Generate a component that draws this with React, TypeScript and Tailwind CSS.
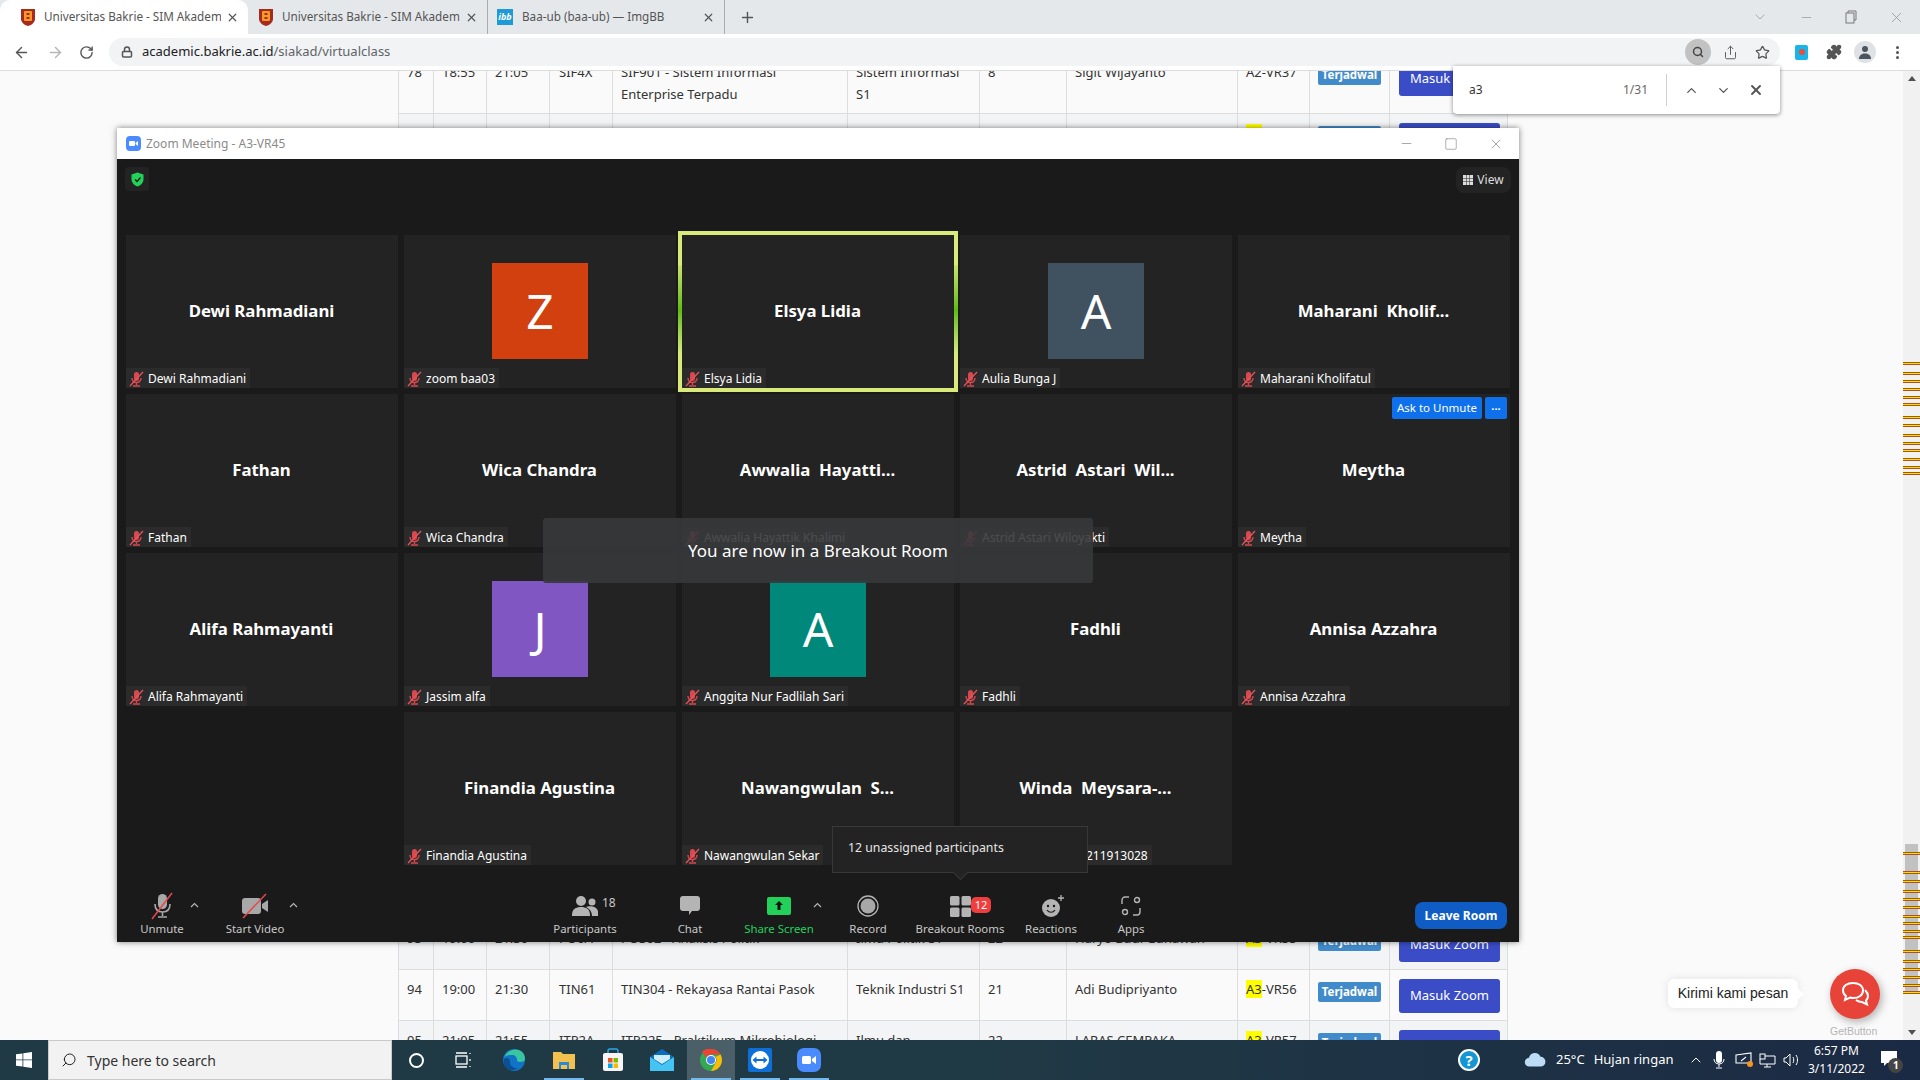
import React from "react";
import { ArrowLeft, ArrowRight, RotateCw, Lock, X, Plus, ChevronUp, ChevronDown, Star, Share, Puzzle, Search, Minus, Square } from "lucide-react";

const tiles = [
  { name: "Dewi Rahmadiani", label: "Dewi Rahmadiani" },
  { name: "", label: "zoom baa03", letter: "Z", color: "bg-[#d24010]" },
  { name: "Elsya Lidia", label: "Elsya Lidia", active: true },
  { name: "", label: "Aulia Bunga J", letter: "A", color: "bg-[#40525f]" },
  { name: "Maharani  Kholif...", label: "Maharani Kholifatul" },
  { name: "Fathan", label: "Fathan" },
  { name: "Wica Chandra", label: "Wica Chandra" },
  { name: "Awwalia  Hayatti...", label: "Awwalia Hayattik Khalimi" },
  { name: "Astrid  Astari  Wil...", label: "Astrid Astari Wiloyakti" },
  { name: "Meytha", label: "Meytha", unmute: true },
  { name: "Alifa Rahmayanti", label: "Alifa Rahmayanti" },
  { name: "", label: "Jassim alfa", letter: "J", color: "bg-[#7f56c2]" },
  { name: "", label: "Anggita Nur Fadlilah Sari", letter: "A", color: "bg-[#00897b]" },
  { name: "Fadhli", label: "Fadhli" },
  { name: "Annisa Azzahra", label: "Annisa Azzahra" },
];

const lastRow = [
  { name: "Finandia Agustina", label: "Finandia Agustina" },
  { name: "Nawangwulan  S...", label: "Nawangwulan Sekar" },
  { name: "Winda  Meysara-...", label: "Winda Meysara-11211913028" },
];

const marks = [362, 372, 380, 388, 396, 403, 416, 424, 434, 442, 449, 458, 466, 472, 852, 871, 880, 890, 898, 906, 915, 922, 930, 936, 950, 960, 968, 976, 984, 991];

const cols = [35, 53, 63, 63, 235, 132, 87, 171, 72, 80, 118];

const SmallMicOff = () => (
  <svg width="15" height="16" viewBox="0 0 15 16" className="shrink-0">
    <rect x="5" y="1" width="5" height="9" rx="2.5" fill="#d9484f" />
    <path d="M3 7c0 3 2 4.500 4.500 4.500S12 10 12 7M7.500 11.500V14M4 15h7" stroke="#d9484f" strokeWidth="1.400" fill="none" />
    <path d="M1 15L14 1" stroke="#e4555a" strokeWidth="1.300" />
  </svg>
);

const Tile = ({ t }: { t: any }) => (
  <div className={`relative flex h-[153px] w-[272px] items-center justify-center bg-[#232323] ${t.active ? "outline-[4px] outline-[#d9e97a] z-10" : ""}`}>
    {t.active && <div className="absolute -left-[4px] top-[30px] h-[90px] w-[4px] bg-gradient-to-b from-[#c6e36a] via-[#62bb0a] to-[#d8ec80]" />}
    {t.active && <div className="absolute -right-[4px] top-[30px] h-[90px] w-[4px] bg-gradient-to-b from-[#c6e36a] via-[#62bb0a] to-[#d8ec80]" />}
    {t.letter ? (
      <div className={`-mt-[1px] flex h-[96px] w-[96px] items-center justify-center text-[48px] leading-none text-white ${t.color}`}>{t.letter}</div>
    ) : (
      <span className="mb-[2px] mr-[1px] whitespace-pre text-[16.800px] font-bold text-white">{t.name}</span>
    )}
    <div className="absolute bottom-0 left-0 flex h-[20px] items-center gap-[4px] bg-[#2b2b2b] pl-[3px] pr-[4px] pt-[1px] text-[12px] text-white">
      <SmallMicOff />
      <span className="whitespace-nowrap">{t.label}</span>
    </div>
    {t.unmute && (
      <div className="absolute right-[3px] top-[3px] flex gap-[3px]">
        <div className="flex h-[22px] w-[90px] items-center justify-center rounded-[2px] bg-[#0e71eb] text-[11.500px] text-white">Ask to Unmute</div>
        <div className="flex h-[22px] w-[22px] items-center justify-center rounded-[2px] bg-[#0e71eb] text-[11px] font-bold leading-none text-white">···</div>
      </div>
    )}
  </div>
);

const Caret = ({ left }: { left: string }) => (
  <svg width="9" height="6" viewBox="0 0 9 6" className={`absolute top-[11px] ${left}`}>
    <path d="M1 5l3.500-3.500L8 5" stroke="#b5b5b5" strokeWidth="1.200" fill="none" />
  </svg>
);

const ToolItem = ({ label, className, children, green }: { label: string; className: string; children: React.ReactNode; green?: boolean }) => (
  <div className={`relative flex shrink-0 flex-col items-center ${className}`}>
    <div className="flex h-[30px] items-center justify-center">{children}</div>
    <span className={`-mt-[1px] whitespace-nowrap text-[11.400px] leading-[18px] ${green ? "text-[#22d15a]" : "text-[#c8c8c8]"}`}>{label}</span>
  </div>
);

const ZoomWindow = () => (
  <div className="absolute left-[117px] top-[128px] flex h-[814px] w-[1402px] flex-col shadow-[0_0_6px_rgba(0,0,0,0.5)]">
    <div className="flex h-[31px] shrink-0 items-center bg-white pl-[9px]">
      <svg width="15" height="15" viewBox="0 0 15 15">
        <rect width="15" height="15" rx="4" fill="#4a8cff" />
        <rect x="3" y="5" width="6" height="5" rx="1" fill="#fff" />
        <path d="M9.500 7l2.500-2v5l-2.500-2z" fill="#fff" />
      </svg>
      <span className="ml-[5px] text-[12px] text-[#8a8a8a]">Zoom Meeting - A3-VR45</span>
      <div className="ml-auto flex items-center gap-[30px] pr-[15px] text-[#777]">
        <Minus size={15} strokeWidth={1} />
        <Square size={14} strokeWidth={1} />
        <X size={16} strokeWidth={1} />
      </div>
    </div>
    <div className="flex flex-1 flex-col bg-[#1a1a1a]">
      <div className="flex h-[76px] shrink-0 items-start justify-between pl-[8px] pr-[8px] pt-[8px]">
        <div className="flex h-[24px] w-[24px] items-center justify-center rounded-[4px] bg-[#232323]">
          <svg width="13" height="15" viewBox="0 0 13 15">
            <path d="M6.500 0.500L12.500 2.500V7c0 4-3 6.500-6 7.500-3-1-6-3.500-6-7.500V2.500z" fill="#22d15a" />
            <path d="M4 7.500l2 2 3.500-4" stroke="#111" strokeWidth="1.200" fill="none" />
          </svg>
        </div>
        <div className="flex h-[26px] w-[55px] items-center justify-center gap-[4px] rounded-[8px] bg-[#232323] text-[12px] text-[#dcdcdc]">
          <svg width="10" height="10" viewBox="0 0 10 10" fill="#ddd">
            <rect width="3" height="3" /><rect x="3.500" width="3" height="3" /><rect x="7" width="3" height="3" />
            <rect y="3.500" width="3" height="3" /><rect x="3.500" y="3.500" width="3" height="3" /><rect x="7" y="3.500" width="3" height="3" />
            <rect y="7" width="3" height="3" /><rect x="3.500" y="7" width="3" height="3" /><rect x="7" y="7" width="3" height="3" />
          </svg>
          View
        </div>
      </div>
      <div className="grid grid-cols-[repeat(5,272px)] gap-[6px] pl-[9px]">
        {tiles.map((t, i) => <Tile key={i} t={t} />)}
        <div />
        {lastRow.map((t, i) => <Tile key={i} t={t} />)}
      </div>
      <div className="flex flex-1 items-start pt-[26px]">
        <ToolItem label="Unmute" className="ml-[10px] w-[70px]">
          <svg width="30" height="30" viewBox="0 0 30 30">
            <rect x="11" y="3" width="9" height="15" rx="4.500" fill="#a8a8a8" />
            <path d="M8 13c0 6 3 8 7.500 8s7.500-2 7.500-8M15.500 21v4M11 26h9" stroke="#a8a8a8" strokeWidth="1.600" fill="none" />
            <path d="M5 28L25 2" stroke="#e5484d" strokeWidth="1.500" />
          </svg>
          <Caret left="left-[63px]" />
        </ToolItem>
        <ToolItem label="Start Video" className="ml-[20px] w-[76px]">
          <svg width="30" height="30" viewBox="0 0 30 30">
            <rect x="2" y="7" width="19" height="16" rx="3" fill="#a8a8a8" />
            <path d="M22 13l6-4v12l-6-4z" fill="#a8a8a8" />
            <path d="M3 27L26 3" stroke="#e5484d" strokeWidth="1.500" />
          </svg>
          <Caret left="left-[72px]" />
        </ToolItem>
        <ToolItem label="Participants" className="ml-[252px] w-[80px]">
          <svg width="26" height="22" viewBox="0 0 26 22" fill="#b4b4b4">
            <circle cx="9" cy="6" r="5" /><path d="M0 20c0-6 4-8 9-8s9 2 9 8v1H0z" />
            <circle cx="20" cy="7" r="3.500" /><path d="M14 12c2-1 10-2 12 4v5h-6c0-4-2-7-6-9z" />
          </svg>
          <span className="absolute left-[57px] top-[3px] text-[12px] text-[#c8c8c8]">18</span>
        </ToolItem>
        <ToolItem label="Chat" className="ml-[40px] w-[50px]">
          <svg width="22" height="22" viewBox="0 0 22 22" fill="#b4b4b4">
            <path d="M4 1h14a3 3 0 013 3v9a3 3 0 01-3 3h-5l-3 4v-4H4a3 3 0 01-3-3V4a3 3 0 013-3z" />
          </svg>
        </ToolItem>
        <ToolItem label="Share Screen" green className="ml-[24px] w-[80px]">
          <svg width="24" height="18" viewBox="0 0 24 18">
            <rect width="24" height="18" rx="2" fill="#22d15a" />
            <path d="M12 4l-4 4h2.500v5h3V8H16z" fill="#111" />
          </svg>
          <Caret left="left-[74px]" />
        </ToolItem>
        <ToolItem label="Record" className="ml-[24px] w-[50px]">
          <svg width="22" height="22" viewBox="0 0 22 22">
            <circle cx="11" cy="11" r="10" stroke="#b4b4b4" strokeWidth="1.300" fill="none" />
            <circle cx="11" cy="11" r="7.500" fill="#a8a8a8" />
          </svg>
        </ToolItem>
        <ToolItem label="Breakout Rooms" className="ml-[22px] w-[90px]">
          <svg width="21" height="21" viewBox="0 0 21 21" fill="#b4b4b4">
            <rect width="9.500" height="9.500" rx="1.500" /><rect x="11.500" width="9.500" height="9.500" rx="1.500" />
            <rect y="11.500" width="9.500" height="9.500" rx="1.500" /><rect x="11.500" y="11.500" width="9.500" height="9.500" rx="1.500" />
          </svg>
          <span className="absolute left-[56px] top-[6px] flex h-[16px] w-[20px] items-center justify-center rounded-[5px] bg-[#f03e3e] text-[11px] text-white">12</span>
        </ToolItem>
        <ToolItem label="Reactions" className="ml-[16px] w-[60px]">
          <svg width="24" height="24" viewBox="0 0 24 24" className="ml-[3px]">
            <circle cx="10" cy="14" r="9" fill="#b4b4b4" />
            <circle cx="7" cy="12" r="1.200" fill="#1a1a1a" /><circle cx="13" cy="12" r="1.200" fill="#1a1a1a" />
            <path d="M6 16c2 3 6 3 8 0" stroke="#1a1a1a" strokeWidth="1.200" fill="none" />
            <path d="M20 1v6M17 4h6" stroke="#b4b4b4" strokeWidth="1.300" />
          </svg>
        </ToolItem>
        <ToolItem label="Apps" className="ml-[30px] w-[40px]">
          <svg width="20" height="20" viewBox="0 0 20 20" fill="none" stroke="#b4b4b4" strokeWidth="1.400">
            <path d="M1 8V4a3 3 0 013-3h4M19 12v4a3 3 0 01-3 3h-4" />
            <circle cx="16" cy="4" r="2.500" /><circle cx="4" cy="16" r="2.500" />
          </svg>
        </ToolItem>
        <div className="ml-auto mr-[12px] mt-[11px] flex h-[27px] w-[92px] items-center justify-center rounded-[8px] bg-[#0e5cc4] text-[12px] font-bold text-white">Leave Room</div>
      </div>
    </div>
    <div className="absolute left-[426px] top-[390px] z-20 flex h-[65px] w-[550px] items-center justify-center rounded-[3px] bg-[#37383b]/90 text-[17px] text-white">You are now in a Breakout Room</div>
    <div className="absolute left-[715px] top-[698px] z-20 flex h-[47px] w-[256px] items-center border border-[#383838] bg-[#232323] pl-[15px] pb-[3px] text-[12.300px] text-[#e6e6e6]">
      12 unassigned participants
      <div className="absolute -bottom-[6px] left-[122px] h-[11px] w-[11px] rotate-45 border-b border-r border-[#383838] bg-[#232323]" />
    </div>
  </div>
);

const Row = ({ r, shade }: { r: string[]; shade?: boolean }) => (
  <tr className={`h-[51px] ${shade ? "bg-[#f3f4f5]" : "bg-[#fafafa]"}`}>
    {r.slice(0, 8).map((c, i) => (
      <td key={i} className="border border-[#dddddd] px-[8px] py-[8px] align-top leading-[22px]">
        {i === 3 ? <span className="ml-[1px]">{c}</span> : c}
      </td>
    ))}
    <td className="border border-[#dddddd] px-[8px] py-[8px] align-top leading-[22px]">
      {r[8].startsWith("A3") ? <><mark className="bg-[#ffff00] text-[#333]">A3</mark>{r[8].slice(2)}</> : r[8]}
    </td>
    <td className="border border-[#dddddd] px-[8px] pt-[12px] align-top">
      <div className="flex h-[20px] w-[63px] items-center justify-center rounded-[2px] bg-[#428bca] text-[11.500px] font-bold text-white">Terjadwal</div>
    </td>
    <td className="border border-[#dddddd] pl-[9px] pt-[9px] align-top">
      <div className="flex h-[34px] w-[101px] items-center justify-center rounded-[3px] bg-[#3a4dc6] text-[13px] text-white">Masuk Zoom</div>
    </td>
  </tr>
);

const Table = () => (
  <table className="ml-[398px] -mt-[19px] w-[1109px] table-fixed border-collapse text-[13px] text-[#333]">
    <colgroup>
      {cols.map((w, i) => <col key={i} style={{ width: w }} />)}
    </colgroup>
    <tbody>
      <Row r={["78", "18:55", "21:05", "SIF4X", "SIF901 - Sistem Informasi Enterprise Terpadu", "Sistem Informasi S1", "8", "Sigit Wijayanto", "A2-VR37"]} />
      <Row shade r={["79", "19:05", "21:05", "MN K1X", "MN K100 - Pemasaran Manajemen", "Manajemen S1", "20", "Didik H", "A3-VR44"]} />
      <tr className="h-[744px]"><td colSpan={11} /></tr>
      <Row shade r={["93", "19:00", "21:30", "PO6A", "PO302 - Analisis Politik", "Ilmu Politik S1", "22", "Haryo Budi Gunawan", "A3-VR55"]} />
      <Row r={["94", "19:00", "21:30", "TIN61", "TIN304 - Rekayasa Rantai Pasok", "Teknik Industri S1", "21", "Adi Budipriyanto", "A3-VR56"]} />
      <Row shade r={["95", "21:05", "21:55", "ITP2A", "ITP225 - Praktikum Mikrobiologi", "Ilmu dan", "22", "LARAS CEMPAKA", "A3-VR57"]} />
    </tbody>
  </table>
);

const Scrollbar = () => (
  <div className="relative w-[17px] shrink-0 bg-[#f1f1f1]">
    <div className="absolute left-[5px] top-[5px] h-0 w-0 border-x-[4px] border-b-[5px] border-x-transparent border-b-[#505050]" />
    <div className="absolute left-[2px] top-[773px] h-[147px] w-[13px] bg-[#c1c1c1]" />
    {marks.map((m) => (
      <div key={m} className="absolute left-0 h-[3px] w-[17px] border-y border-[#a9551a] bg-[#f6e000]" style={{ top: m - 71 }} />
    ))}
    <div className="absolute bottom-[5px] left-[5px] h-0 w-0 border-x-[4px] border-t-[5px] border-x-transparent border-t-[#505050]" />
  </div>
);

const Shield = () => (
  <svg width="14" height="18" viewBox="0 0 14 18" className="shrink-0">
    <path d="M0 1h14v10c0 3-3 6-7 7-4-1-7-4-7-7z" fill="#a62a20" />
    <rect x="3" y="3" width="8" height="10" rx="1" fill="#f59a23" />
    <rect x="5.500" y="5" width="3" height="2" fill="#a62a20" /><rect x="5.500" y="9" width="3" height="2" fill="#a62a20" />
  </svg>
);

const Tab = ({ icon, title, className }: { icon: React.ReactNode; title: string; className: string }) => (
  <div className={`flex h-[34px] shrink-0 items-center pr-[9px] text-[11.700px] text-[#555] ${className}`}>
    {icon}
    <span className="ml-[9px] flex-1 overflow-hidden whitespace-nowrap">{title}</span>
    <X size={13} strokeWidth={2.200} className="ml-[5px] shrink-0 text-[#555]" />
  </div>
);

const BrowserChrome = () => (
  <>
    <div className="flex h-[34px] shrink-0 items-end bg-[#e5e8eb]">
      <Tab icon={<Shield />} title="Universitas Bakrie - SIM Akademik" className="w-[248px] rounded-t-[10px] bg-white pl-[21px]" />
      <Tab icon={<Shield />} title="Universitas Bakrie - SIM Akademik" className="w-[239px] pl-[11px]" />
      <Tab
        icon={<div className="flex h-[16px] w-[16px] shrink-0 items-center justify-center bg-[#1e9bd7] text-[9px] italic font-bold text-white">ibb</div>}
        title="Baa-ub (baa-ub) — ImgBB"
        className="w-[238px] border-x border-[#a9acb0] pl-[9px]"
      />
      <div className="flex h-[34px] w-[44px] items-center justify-center"><Plus size={17} strokeWidth={2} className="text-[#555]" /></div>
      <div className="ml-auto flex h-[34px] items-center gap-[31px] pr-[15px] text-[#8a8c8e]">
        <ChevronDown size={16} strokeWidth={1} />
        <Minus size={15} strokeWidth={1} />
        <svg width="12" height="14" viewBox="0 0 12 14" fill="none" stroke="#777" strokeWidth="1"><rect x="1" y="3" width="8" height="10" /><path d="M3 3V1h8v9H9" /></svg>
        <X size={17} strokeWidth={1} />
      </div>
    </div>
    <div className="flex h-[37px] shrink-0 items-center border-b border-[#dcdcdc] bg-white">
      <ArrowLeft size={17} strokeWidth={2} className="ml-[13px] text-[#555]" />
      <ArrowRight size={17} strokeWidth={2} className="ml-[17px] text-[#b5b5b5]" />
      <RotateCw size={15} strokeWidth={2.200} className="ml-[15px] text-[#555]" />
      <div className="ml-[15px] flex h-[28px] w-[1671px] items-center rounded-full bg-[#f1f3f4] pl-[12px]">
        <Lock size={12} strokeWidth={3} className="text-[#555]" />
        <span className="ml-[9px] text-[13px] text-[#202124]">academic.bakrie.ac.id<span className="text-[#5f6368]">/siakad/virtualclass</span></span>
        <div className="ml-auto flex items-center">
          <div className="flex h-[26px] w-[26px] items-center justify-center rounded-full bg-[#c2c2c2]"><Search size={12} strokeWidth={3} className="text-[#444]" /></div>
          <Share size={15} strokeWidth={1.500} className="ml-[12px] text-[#555]" />
          <Star size={15} strokeWidth={2} className="ml-[17px] mr-[10px] text-[#555]" />
        </div>
      </div>
      <div className="ml-[15px] flex h-[15px] w-[13px] items-center justify-center rounded-[2px] bg-[#16b5ea]"><div className="h-[6px] w-[6px] rounded-full bg-[#ef4b3a]" /></div>
      <Puzzle size={16} strokeWidth={2} fill="#555" className="ml-[18px] text-[#555]" />
      <div className="ml-[12px] flex h-[22px] w-[22px] items-center justify-center rounded-full bg-[#dfe1e5]">
        <svg width="14" height="14" viewBox="0 0 14 14" fill="#4a5560"><circle cx="7" cy="4" r="3" /><path d="M1 14c0-4 3-5.500 6-5.500s6 1.500 6 5.500z" /></svg>
      </div>
      <div className="ml-[20px] flex flex-col gap-[2px]">
        <div className="h-[3px] w-[3px] rounded-full bg-[#555]" /><div className="h-[3px] w-[3px] rounded-full bg-[#555]" /><div className="h-[3px] w-[3px] rounded-full bg-[#555]" />
      </div>
    </div>
  </>
);

const FindBar = () => (
  <div className="absolute left-[1453px] top-[66px] z-30 flex h-[48px] w-[327px] items-center rounded-b-[4px] bg-white pl-[16px] pr-[16px] text-[12px] shadow-[0_1px_4px_rgba(0,0,0,0.45)]">
    <span className="text-[#333]">a3</span>
    <span className="ml-auto text-[#666]">1/31</span>
    <div className="ml-[18px] mr-[17px] h-[32px] w-px bg-[#d0d0d0]" />
    <ChevronUp size={15} strokeWidth={2} className="text-[#555]" />
    <ChevronDown size={15} strokeWidth={2} className="ml-[17px] text-[#555]" />
    <X size={16} strokeWidth={2.800} className="ml-[17px] text-[#555]" />
  </div>
);

const ChatWidget = () => (
  <>
    <div className="absolute left-[1668px] top-[979px] z-10 flex h-[29px] w-[130px] items-center justify-center rounded-[6px] bg-white font-['Liberation_Sans',sans-serif] text-[14px] text-[#222] shadow-[0_0_8px_rgba(0,0,0,0.1)]">
      Kirimi kami pesan
      <div className="absolute -right-[4px] top-[11px] h-[8px] w-[8px] rotate-45 bg-white" />
    </div>
    <div className="absolute left-[1830px] top-[969px] z-10 flex h-[50px] w-[50px] items-center justify-center rounded-full bg-[#e74339] shadow-[2px_3px_8px_rgba(0,0,0,0.3)]">
      <svg width="28" height="26" viewBox="0 0 28 26" fill="none" stroke="#fff" strokeWidth="2">
        <path d="M12 2c6 0 10 3 10 7.500S18 17 12 17c-1 0-2 0-3-.5L4 19l1-4c-2-1.500-3-3.500-3-5.500C2 5 6 2 12 2z" />
        <path d="M24 9c2 2 3 3.500 3 6 0 2-1 3.500-2 4.500l1 4-5-2.500c-2 0-4-.5-6-2" />
      </svg>
    </div>
    <span className="absolute left-[1830px] top-[1024px] z-10 font-['Liberation_Sans',sans-serif] text-[10.500px] text-[#b5b5b5]">GetButton</span>
  </>
);

const TaskIcon = ({ children, active, running }: { children: React.ReactNode; active?: boolean; running?: boolean }) => (
  <div className={`relative flex h-[40px] w-[48px] shrink-0 items-center justify-center ${active ? "bg-[#4a5f68]" : ""}`}>
    {children}
    {running && <div className="absolute bottom-0 left-[4px] right-[4px] h-[2px] bg-[#76b9ed]" />}
  </div>
);

const Taskbar = () => (
  <div className="flex h-[40px] shrink-0 items-center bg-gradient-to-r from-[#203a45] via-[#203a45] to-[#1b2a44] text-white">
    <div className="flex h-[40px] w-[48px] items-center justify-center">
      <svg width="16" height="16" viewBox="0 0 16 16" fill="#fff">
        <path d="M0 2.300L6.500 1.400V7.500H0zM7.300 1.300L16 0V7.500H7.300zM0 8.300H6.500V14.500L0 13.700zM7.300 8.300H16V16L7.300 14.700z" />
      </svg>
    </div>
    <div className="flex h-[40px] w-[344px] items-center border border-[#c9c9c9] bg-[#f2f2f2] pl-[12px] text-[14px] text-[#333]">
      <Search size={16} strokeWidth={1.500} className="-scale-x-100 text-[#222]" />
      <span className="ml-[10px]">Type here to search</span>
    </div>
    <TaskIcon><div className="h-[15px] w-[15px] rounded-full border-[2.500px] border-white" /></TaskIcon>
    <TaskIcon>
      <svg width="18" height="18" viewBox="0 0 18 18" fill="none" stroke="#fff" strokeWidth="1.300">
        <rect x="1" y="5" width="11" height="8" /><path d="M1 2h11M1 16h11M15 2v1M15 8v2M15 15v1" />
      </svg>
    </TaskIcon>
    <div className="ml-[2px]" />
    <TaskIcon>
      <svg width="24" height="24" viewBox="0 0 24 24">
        <circle cx="12" cy="12" r="11" fill="#1173c5" />
        <path d="M2 10C4 3 11 0 17 2c4 1.500 6 5 6 9 0 2-2 3-5 3-2 0-3-1-3-2 0-3-2-5-5-5-4 0-7 1-8 3z" fill="#37c6a0" />
        <path d="M8 14c0 4 3 6 7 6-3 3-8 3-11 0-2-2-3-6-2-9 2-2 6-1 6 3z" fill="#0b4f94" />
      </svg>
    </TaskIcon>
    <div className="ml-[2px] flex gap-[1px]">
      <TaskIcon running>
        <svg width="22" height="20" viewBox="0 0 22 20">
          <path d="M0 2h8l2 2h12v15H0z" fill="#f2c14e" />
          <path d="M6 12h10v7h-2v-4H8v4H6z" fill="#2b88d8" />
        </svg>
      </TaskIcon>
      <TaskIcon>
        <svg width="22" height="24" viewBox="0 0 22 24">
          <path d="M6 5V3a2 2 0 012-2h6a2 2 0 012 2v2" stroke="#29a8ea" strokeWidth="1.500" fill="none" />
          <rect x="1" y="5" width="20" height="18" rx="2" fill="#f5f5f5" />
          <rect x="6" y="10" width="4.500" height="4.500" fill="#f25022" /><rect x="11.500" y="10" width="4.500" height="4.500" fill="#7fba00" />
          <rect x="6" y="15.500" width="4.500" height="4.500" fill="#00a4ef" /><rect x="11.500" y="15.500" width="4.500" height="4.500" fill="#ffb900" />
        </svg>
      </TaskIcon>
      <TaskIcon>
        <svg width="24" height="22" viewBox="0 0 24 22">
          <path d="M0 8L12 0l12 8v14H0z" fill="#0a6ebd" />
          <path d="M0 8l12 8 12-8v14H0z" fill="#45c3f2" />
          <path d="M4 6h16v4l-8 5-8-5z" fill="#cfeefb" />
        </svg>
      </TaskIcon>
      <TaskIcon active running>
        <svg width="24" height="24" viewBox="0 0 24 24">
          <circle cx="12" cy="12" r="11" fill="#34a853" />
          <path d="M12 1a11 11 0 019.500 5.500H12a5.500 5.500 0 00-5 3L3 3.500A11 11 0 0112 1z" fill="#ea4335" />
          <path d="M21.500 6.500A11 11 0 0112 23l4.700-8.200a5.500 5.500 0 00-.2-6z" fill="#fbbc05" />
          <circle cx="12" cy="12" r="5" fill="#fff" /><circle cx="12" cy="12" r="4" fill="#4285f4" />
        </svg>
      </TaskIcon>
      <TaskIcon running>
        <svg width="24" height="24" viewBox="0 0 24 24">
          <rect width="24" height="24" rx="2" fill="#0e6fd8" />
          <circle cx="12" cy="12" r="9" fill="#fff" />
          <path d="M4.500 12l4-3.500V11h7V8.500l4 3.500-4 3.500V13h-7v2.500z" fill="#0e6fd8" />
        </svg>
      </TaskIcon>
      <TaskIcon running>
        <svg width="24" height="24" viewBox="0 0 24 24">
          <rect width="24" height="24" rx="7" fill="#4a8cff" />
          <rect x="5" y="8" width="9" height="8" rx="1.500" fill="#fff" />
          <path d="M15 11l4-3v8l-4-3z" fill="#fff" />
        </svg>
      </TaskIcon>
    </div>
    <div className="ml-[625px] flex h-[22px] w-[22px] items-center justify-center rounded-full border-[2px] border-white bg-[#1496d4] text-[15px] font-bold">?</div>
    <svg width="22" height="16" viewBox="0 0 20 14" className="ml-[44px]" fill="#bcdcf5">
      <path d="M5 13a4 4 0 01-.5-8A5.500 5.500 0 0115 4a4.500 4.500 0 010 9z" />
    </svg>
    <span className="ml-[10px] whitespace-nowrap text-[13px]">25°C</span>
    <span className="ml-[9px] whitespace-nowrap text-[13px]">Hujan ringan</span>
    <ChevronUp size={16} strokeWidth={1.500} className="ml-[15px]" />
    <svg width="12" height="18" viewBox="0 0 12 18" className="ml-[9px]" fill="#fff">
      <rect x="3" y="0" width="6" height="12" rx="3" />
      <path d="M1 8c0 3 2 5 5 5s5-2 5-5M6 13v3M3 17h6" stroke="#fff" strokeWidth="1" fill="none" />
    </svg>
    <svg width="18" height="16" viewBox="0 0 18 16" className="ml-[10px]" fill="none" stroke="#fff" strokeWidth="1.100">
      <path d="M1 3l15-2v10H1z" /><path d="M6 9l5-4" />
      <circle cx="15" cy="12" r="3" fill="#f7941d" stroke="none" />
    </svg>
    <svg width="17" height="15" viewBox="0 0 17 15" className="ml-[6px]" fill="none" stroke="#fff" strokeWidth="1">
      <rect x="1" y="1" width="5" height="5" /><path d="M6 3h10v8H1V6M8 11v3M5 14h7" />
    </svg>
    <svg width="17" height="14" viewBox="0 0 17 14" className="ml-[7px]" fill="none" stroke="#fff" strokeWidth="1">
      <path d="M1 5h2l4-4v12l-4-4H1zM10 4c1 2 1 4 0 6M13 2c2 3 2 7 0 10" />
    </svg>
    <div className="ml-[6px] flex w-[60px] shrink-0 flex-col items-center text-[12px] leading-[18px]">
      <span className="whitespace-nowrap">6:57 PM</span>
      <span className="whitespace-nowrap">3/11/2022</span>
    </div>
    <div className="relative ml-[15px] h-[18px] w-[18px]">
      <svg width="16" height="16" viewBox="0 0 16 16" fill="#fff"><path d="M0 0h16v12H6l-3 3v-3H0z" /></svg>
      <span className="absolute left-[7px] top-[7px] flex h-[15px] w-[15px] items-center justify-center rounded-full bg-[#444] text-[10px] font-bold text-white">1</span>
    </div>
  </div>
);

export default function App() {
  return (
    <div className="relative flex h-[1080px] w-[1920px] flex-col overflow-hidden bg-[#fafafa] font-['Noto_Sans','Open_Sans',sans-serif]">
      <BrowserChrome />
      <div className="flex min-h-0 flex-1">
        <div className="min-w-0 flex-1 overflow-hidden">
          <Table />
        </div>
        <Scrollbar />
      </div>
      <Taskbar />
      <ZoomWindow />
      <FindBar />
      <ChatWidget />
    </div>
  );
}
